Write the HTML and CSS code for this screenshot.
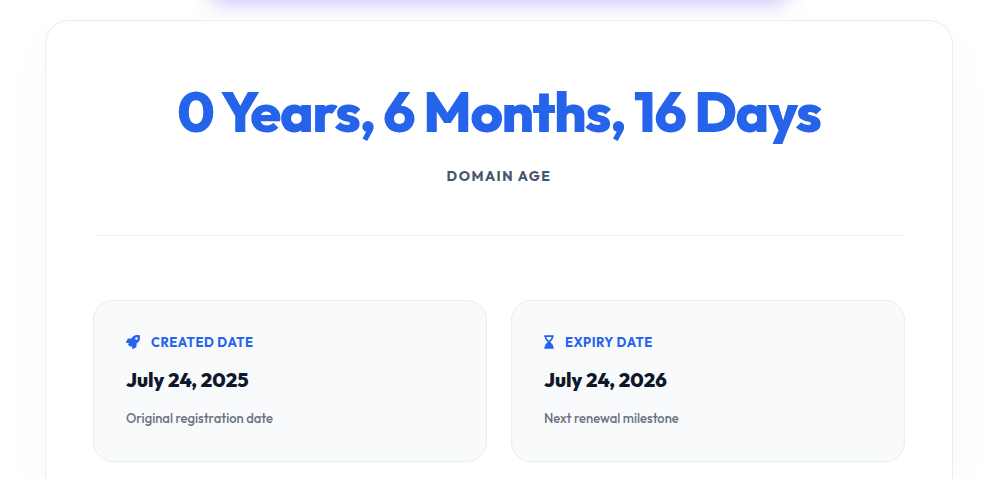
FILE: index.html
```html
<!DOCTYPE html>
<html lang="en">
<head>
    <meta charset="UTF-8">
    <meta name="viewport" content="width=device-width, initial-scale=1.0">
    <title>Domain Age Checker</title>
    <link rel="stylesheet" href="styles.css">
</head>
<body>
    <div class="search-panel"></div>

    <main class="result-card">
        <header class="age-header">
            <h1 class="age-value">0 Years, 6 Months, 16 Days</h1>
            <p class="age-label">Domain Age</p>
        </header>

        <div class="info-grid">
            <section class="info-box">
                <h2 class="info-label">
                    <svg class="icon" viewBox="0 0 512 512" aria-hidden="true">
                        <path fill-rule="evenodd" d="M505 19c-2-6-7-11-13-12-32-7-57-7-82-7-104 0-166 56-212 128H95c-16 0-35 12-43 27L3 252c-2 3-3 8-3 12 0 13 11 24 24 24h92l-38 38c-7 8-7 20 0 28l80 80c8 7 20 7 28 0l38-38v92c0 13 11 24 24 24 4 0 8-1 11-3l98-49c15-7 27-26 27-43V314c72-46 128-108 128-212 0-26 0-51-7-83zM384 176a48 48 0 1 1 0-96 48 48 0 0 1 0 96z"/>
                    </svg>
                    <span>Created Date</span>
                </h2>
                <p class="info-value">July 24, 2025</p>
                <p class="info-note">Original registration date</p>
            </section>

            <section class="info-box">
                <h2 class="info-label">
                    <svg class="icon icon-narrow" viewBox="0 0 384 512" aria-hidden="true">
                        <path fill-rule="evenodd" d="M32 0C14 0 0 14 0 32s14 32 32 32v11c0 42 17 83 47 113l68 68-68 68c-30 30-47 71-47 113v11c-18 0-32 14-32 32s14 32 32 32h320c18 0 32-14 32-32s-14-32-32-32v-11c0-42-17-83-47-113l-68-68 68-68c30-30 47-71 47-113V64c18 0 32-14 32-32S370 0 352 0H32zM96 75V64h192v11c0 25-10 49-28 67l-68 69-68-69c-18-18-28-42-28-67z"/>
                    </svg>
                    <span>Expiry Date</span>
                </h2>
                <p class="info-value">July 24, 2026</p>
                <p class="info-note">Next renewal milestone</p>
            </section>
        </div>
    </main>
</body>
</html>
```
FILE: styles.css
```css
* {
    box-sizing: border-box;
}
body {
    margin: 0;
    padding: 0 39px 0 45px;
    background-color: #fff;
    color: #0f172a;
    font-family: "Outfit", "Lato", sans-serif;
}
h1, h2, p {
    margin: 0;
}
.search-panel {
    width: 64%;
    height: 60px;
    margin: -64px auto 24px;
    border-radius: 16px;
    box-shadow: 0 8px 20px rgba(79, 70, 229, 0.3);
}
.result-card {
    padding: 48px 47px 17px;
    background-color: #fff;
    border: 1px solid #e9eef2;
    border-bottom: 0;
    border-radius: 24px 24px 0 0;
    box-shadow: 0 20px 50px rgba(0, 0, 0, 0.03);
}
.age-header {
    padding: 10px 0 48px;
    margin-bottom: 64px;
    border-bottom: 1px solid #f1f5f9;
    text-align: center;
}
.age-value {
    color: #2563eb;
    font-size: 56px;
    font-weight: 800;
    line-height: 66px;
    letter-spacing: -0.025em;
}
.age-label {
    margin-top: 20px;
    color: #475569;
    font-size: 14px;
    font-weight: 700;
    line-height: 22px;
    letter-spacing: 1.5px;
    text-transform: uppercase;
}
.info-grid {
    display: grid;
    grid-template-columns: 1fr 1fr;
    gap: 24px;
}
.info-box {
    padding: 30px 32px 32px;
    background-color: #f8fafc;
    border: 1px solid #e5eef1;
    border-radius: 20px;
}
.info-label {
    display: flex;
    align-items: center;
    gap: 11px;
    color: #2563eb;
    font-size: 13px;
    font-weight: 700;
    line-height: 22px;
    letter-spacing: 0.5px;
    text-transform: uppercase;
}
.icon {
    width: 14px;
    height: 14px;
    fill: currentColor;
}
.icon-narrow {
    width: 10px;
}
.info-value {
    margin-top: 12px;
    font-size: 20px;
    font-weight: 800;
    line-height: 30px;
}
.info-note {
    margin-top: 12px;
    color: #6b7280;
    font-size: 13px;
    font-weight: 500;
    line-height: 22px;
}
```
